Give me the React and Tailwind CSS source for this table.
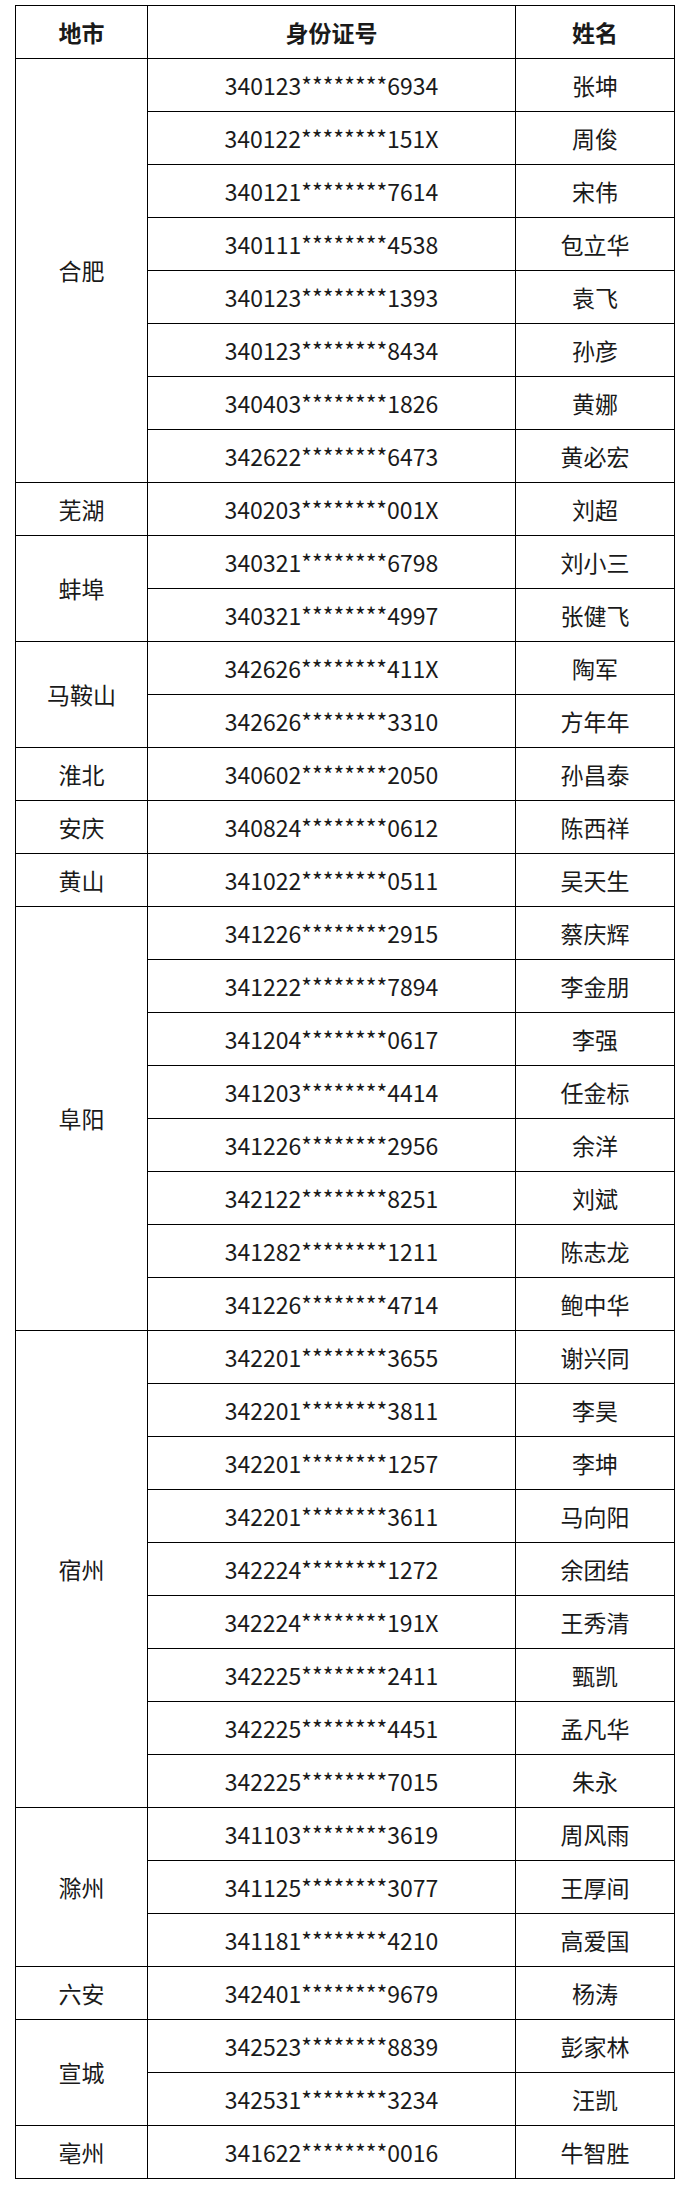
const groups = [
  ["合肥", [
    ["340123********6934", "张坤"],
    ["340122********151X", "周俊"],
    ["340121********7614", "宋伟"],
    ["340111********4538", "包立华"],
    ["340123********1393", "袁飞"],
    ["340123********8434", "孙彦"],
    ["340403********1826", "黄娜"],
    ["342622********6473", "黄必宏"],
  ]],
  ["芜湖", [["340203********001X", "刘超"]]],
  ["蚌埠", [
    ["340321********6798", "刘小三"],
    ["340321********4997", "张健飞"],
  ]],
  ["马鞍山", [
    ["342626********411X", "陶军"],
    ["342626********3310", "方年年"],
  ]],
  ["淮北", [["340602********2050", "孙昌泰"]]],
  ["安庆", [["340824********0612", "陈西祥"]]],
  ["黄山", [["341022********0511", "吴天生"]]],
  ["阜阳", [
    ["341226********2915", "蔡庆辉"],
    ["341222********7894", "李金朋"],
    ["341204********0617", "李强"],
    ["341203********4414", "任金标"],
    ["341226********2956", "余洋"],
    ["342122********8251", "刘斌"],
    ["341282********1211", "陈志龙"],
    ["341226********4714", "鲍中华"],
  ]],
  ["宿州", [
    ["342201********3655", "谢兴同"],
    ["342201********3811", "李昊"],
    ["342201********1257", "李坤"],
    ["342201********3611", "马向阳"],
    ["342224********1272", "余团结"],
    ["342224********191X", "王秀清"],
    ["342225********2411", "甄凯"],
    ["342225********4451", "孟凡华"],
    ["342225********7015", "朱永"],
  ]],
  ["滁州", [
    ["341103********3619", "周风雨"],
    ["341125********3077", "王厚间"],
    ["341181********4210", "高爱国"],
  ]],
  ["六安", [["342401********9679", "杨涛"]]],
  ["宣城", [
    ["342523********8839", "彭家林"],
    ["342531********3234", "汪凯"],
  ]],
  ["亳州", [["341622********0016", "牛智胜"]]],
];

export default function App() {
  const td = "border border-black text-center align-middle p-0";
  return (
    <div
      className="bg-white w-[687px] h-[2198px] pt-[5px] pl-[15px] text-[#1a1a1a]"
      style={{ fontFamily: '"Noto Sans CJK SC", "Noto Sans", sans-serif' }}
    >
      <table className="border-collapse table-fixed w-[659px] text-[23px] leading-none">
        <colgroup>
          <col className="w-[132px]" />
          <col className="w-[368px]" />
          <col className="w-[159px]" />
        </colgroup>
        <thead>
          <tr className="h-[53px]">
            <th className={td + " font-bold"}>地市</th>
            <th className={td + " font-bold"}>身份证号</th>
            <th className={td + " font-bold"}>姓名</th>
          </tr>
        </thead>
        <tbody>
          {groups.map(([city, rows]) =>
            rows.map(([id, name], i) => (
              <tr key={city + i} className="h-[53px]">
                {i === 0 && (
                  <td className={td} rowSpan={rows.length}>
                    {city}
                  </td>
                )}
                <td className={td}>{id}</td>
                <td className={td}>{name}</td>
              </tr>
            ))
          )}
        </tbody>
      </table>
    </div>
  );
}
